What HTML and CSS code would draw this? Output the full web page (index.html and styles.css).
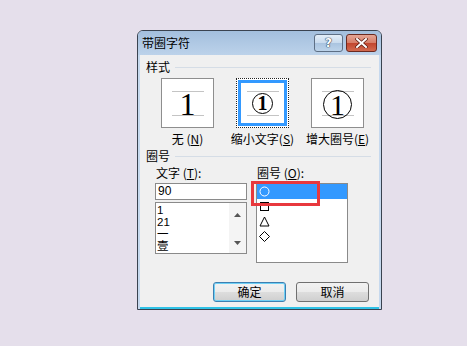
FILE: index.html
```html
<!DOCTYPE html>
<html lang="zh">
<head>
<meta charset="utf-8">
<title>带圈字符</title>
<link rel="stylesheet" href="styles.css">
</head>
<body>
<div class="dialog">
  <div class="titlebar">
    <span class="title">带圈字符</span>
    <div class="tbtns">
      <span class="tb help">?</span>
      <span class="tb close"><svg width="13" height="10" viewBox="0 0 13 10"><path d="M2 1 L11 9 M11 1 L2 9" stroke="#5a1a10" stroke-width="3.4" stroke-linecap="square"/><path d="M2 1 L11 9 M11 1 L2 9" stroke="#fff" stroke-width="2" stroke-linecap="square"/></svg></span>
    </div>
  </div>
  <div class="client">
    <div class="group-head"><span>样式</span><i class="sep"></i></div>
    <div class="styles">
      <div class="style">
        <div class="swatch"><span class="num n-plain">1</span></div>
        <div class="slabel">无 (<u>N</u>)</div>
      </div>
      <div class="style">
        <div class="swatch sel"><span class="num n-small">1</span></div>
        <div class="slabel">缩小文字(<u>S</u>)</div>
      </div>
      <div class="style">
        <div class="swatch"><span class="num n-big">1</span></div>
        <div class="slabel">增大圈号(<u>E</u>)</div>
      </div>
    </div>
    <div class="group-head g2"><span>圈号</span><i class="sep"></i></div>
    <div class="pickers">
      <div class="col">
        <div class="flabel">文字 (<u>T</u>):</div>
        <div class="input">90</div>
        <div class="list left">
          <div class="items">
            <div class="it">1</div>
            <div class="it">21</div>
            <div class="it">一</div>
            <div class="it">壹</div>
          </div>
          <div class="scroll">
            <svg width="7" height="4" viewBox="0 0 7 4"><path d="M0 4 L3.5 0 L7 4Z" fill="#555"/></svg>
            <svg width="7" height="4" viewBox="0 0 7 4"><path d="M0 0 L3.5 4 L7 0Z" fill="#555"/></svg>
          </div>
        </div>
      </div>
      <div class="col">
        <div class="flabel">圈号 (<u>O</u>):</div>
        <div class="list right">
          <div class="sh selrow"><svg width="11" height="11" viewBox="0 0 11 11"><circle cx="5.5" cy="5.5" r="4.5" fill="none" stroke="#fff" stroke-width="1"/></svg></div>
          <div class="sh"><svg width="11" height="11" viewBox="0 0 11 11"><rect x="1.5" y="1.5" width="8" height="8" fill="none" stroke="#000" stroke-width="1"/></svg></div>
          <div class="sh"><svg width="11" height="11" viewBox="0 0 11 11"><path d="M5.5 1 L10 10 L1 10Z" fill="none" stroke="#000" stroke-width="1"/></svg></div>
          <div class="sh"><svg width="11" height="11" viewBox="0 0 11 11"><path d="M5.5 0.5 L10.5 5.5 L5.5 10.5 L0.5 5.5Z" fill="none" stroke="#000" stroke-width="1"/></svg></div>
          <div class="mark"></div>
        </div>
      </div>
    </div>
    <div class="buttons">
      <button class="btn default">确定</button>
      <button class="btn">取消</button>
    </div>
  </div>
</div>
</body>
</html>
```

FILE: styles.css
```css
html, body {
  margin: 0;
  padding: 0;
}
body {
  background: #e5dfeb;
  width: 467px;
  height: 346px;
  overflow: hidden;
  font-family: "Noto Sans CJK SC", "Noto Sans", sans-serif;
  font-size: 12px;
  color: #000;
}
.dialog {
  margin: 30px 0 0 137px;
  width: 243px;
  height: 278px;
  border: 1px solid #3a4350;
  border-radius: 6px 6px 0 0;
  background: #c6d9ee;
  display: flex;
  flex-direction: column;
}
.titlebar {
  height: 24px;
  display: flex;
  align-items: flex-start;
  justify-content: space-between;
  background: linear-gradient(#a3bfdd, #bcd2ea);
  border-radius: 5px 5px 0 0;
}
.title {
  margin: 5px 0 0 4px;
  line-height: 14px;
  font-size: 12px;
}
.tbtns {
  display: flex;
  gap: 3px;
  margin: 3px 4px 0 0;
}
.tb {
  height: 16px;
  border: 1px solid #5d6f85;
  border-radius: 3px;
  display: flex;
  align-items: center;
  justify-content: center;
  box-sizing: content-box;
}
.help {
  width: 27px;
  background: linear-gradient(#e4eef8 0%, #c9dbee 48%, #aac4e0 52%, #bcd3ea 100%);
  font-family: "DejaVu Sans", sans-serif;
  font-weight: bold;
  font-size: 12px;
  color: #fff;
  text-shadow: 0 0 1px #2a3d55, 0 0 1px #2a3d55, 0 0 1px #2a3d55;
}
.close {
  width: 29px;
  border-color: #6b2a20;
  background: linear-gradient(#e4a595 0%, #d77e68 48%, #c2462e 52%, #d26a4f 100%);
}
.client {
  margin: 0 2px 0 2px;
  flex: 1;
  background: #f0f0f0;
  border-bottom: 2px solid #2fc2e6;
  display: flex;
  flex-direction: column;
}
.group-head {
  display: flex;
  align-items: center;
  margin: 6px 8px 0 6px;
  line-height: 12px;
  height: 12px;
}
.group-head .sep {
  flex: 1;
  height: 1px;
  background: #d5dde6;
  margin-left: 5px;
}
.group-head.g2 {
  margin-top: 5px;
}
.styles {
  display: flex;
  gap: 22px;
  margin: 5px 0 0 21px;
}
.style {
  width: 53px;
  display: flex;
  flex-direction: column;
  align-items: center;
}
.slabel {
  margin-top: 5px;
  white-space: nowrap;
  line-height: 12px;
  height: 12px;
}
.swatch {
  width: 53px;
  height: 50px;
  box-sizing: border-box;
  border: 1px solid #8e8e8e;
  background:
    linear-gradient(#c4c4c4, #c4c4c4) 10px 12px / 32px 1px no-repeat,
    linear-gradient(#c4c4c4, #c4c4c4) 10px 36px / 32px 1px no-repeat,
    #fff;
  display: flex;
  align-items: center;
  justify-content: center;
}
.swatch.sel {
  border: 1px dotted #222;
  box-shadow: inset 0 0 0 1px #fff, inset 0 0 0 4px #3399ff;
}
.num {
  font-family: "Liberation Serif", serif;
  color: #000;
  display: flex;
  align-items: center;
  justify-content: center;
}
.n-plain {
  font-size: 32px;
  line-height: 31px;
  margin-top: 2px;
}
.n-small {
  width: 19px;
  height: 19px;
  border: 1.5px solid #000;
  border-radius: 50%;
  font-size: 20px;
  line-height: 19px;
  font-weight: bold;
}
.n-big {
  width: 27px;
  height: 27px;
  border: 1.5px solid #000;
  border-radius: 50%;
  font-size: 30px;
  line-height: 27px;
  margin-top: 3px;
}
.pickers {
  display: flex;
  gap: 9px;
  margin: 5px 0 0 15px;
}
.col {
  width: 92px;
  display: flex;
  flex-direction: column;
}
.flabel {
  line-height: 12px;
  height: 12px;
  margin-left: 1px;
  white-space: nowrap;
}
.input {
  margin-top: 4px;
  height: 17px;
  box-sizing: border-box;
  border: 1px solid #8a8a8a;
  background: #fff;
  padding-left: 2px;
  line-height: 15px;
  font-family: "Liberation Sans", sans-serif;
  font-size: 12px;
}
.list {
  box-sizing: border-box;
  border: 1px solid #8a8a8a;
  background: #fff;
}
.list.left {
  margin-top: 2px;
  height: 52px;
  display: flex;
  overflow: hidden;
}
.items {
  flex: 1;
  padding: 1px 0 0 1px;
}
.it {
  line-height: 12px;
  height: 12px;
  font-size: 11.5px;
  font-family: "Liberation Sans", "Noto Sans CJK SC", sans-serif;
}
.scroll {
  width: 17px;
  background: #f4f4f4;
  display: flex;
  flex-direction: column;
  align-items: center;
  justify-content: space-between;
  padding: 10px 0 8px;
  box-sizing: border-box;
}
.list.right {
  margin-top: 4px;
  height: 80px;
  position: relative;
}
.sh {
  height: 15px;
  display: flex;
  align-items: center;
  padding-left: 2px;
}
.sh.selrow {
  background: #3399ff;
}
.mark {
  position: absolute;
  left: -6px;
  top: -3px;
  width: 69px;
  height: 25px;
  box-sizing: border-box;
  border: 3px solid #e8383d;
}
.buttons {
  display: flex;
  justify-content: flex-end;
  gap: 10px;
  margin: auto 10px 5px 0;
}
.btn {
  width: 73px;
  height: 20px;
  box-sizing: border-box;
  border: 1px solid #707070;
  border-radius: 3px;
  background: linear-gradient(#f2f2f2 0%, #ebebeb 48%, #dddddd 52%, #cfcfcf 100%);
  font-family: "Noto Sans CJK SC", sans-serif;
  font-size: 12px;
  line-height: 16px;
  padding: 0;
  color: #000;
}
.btn.default {
  border-color: #3c7fb1;
  box-shadow: inset 0 0 0 1px #6fd0f5;
}
```
